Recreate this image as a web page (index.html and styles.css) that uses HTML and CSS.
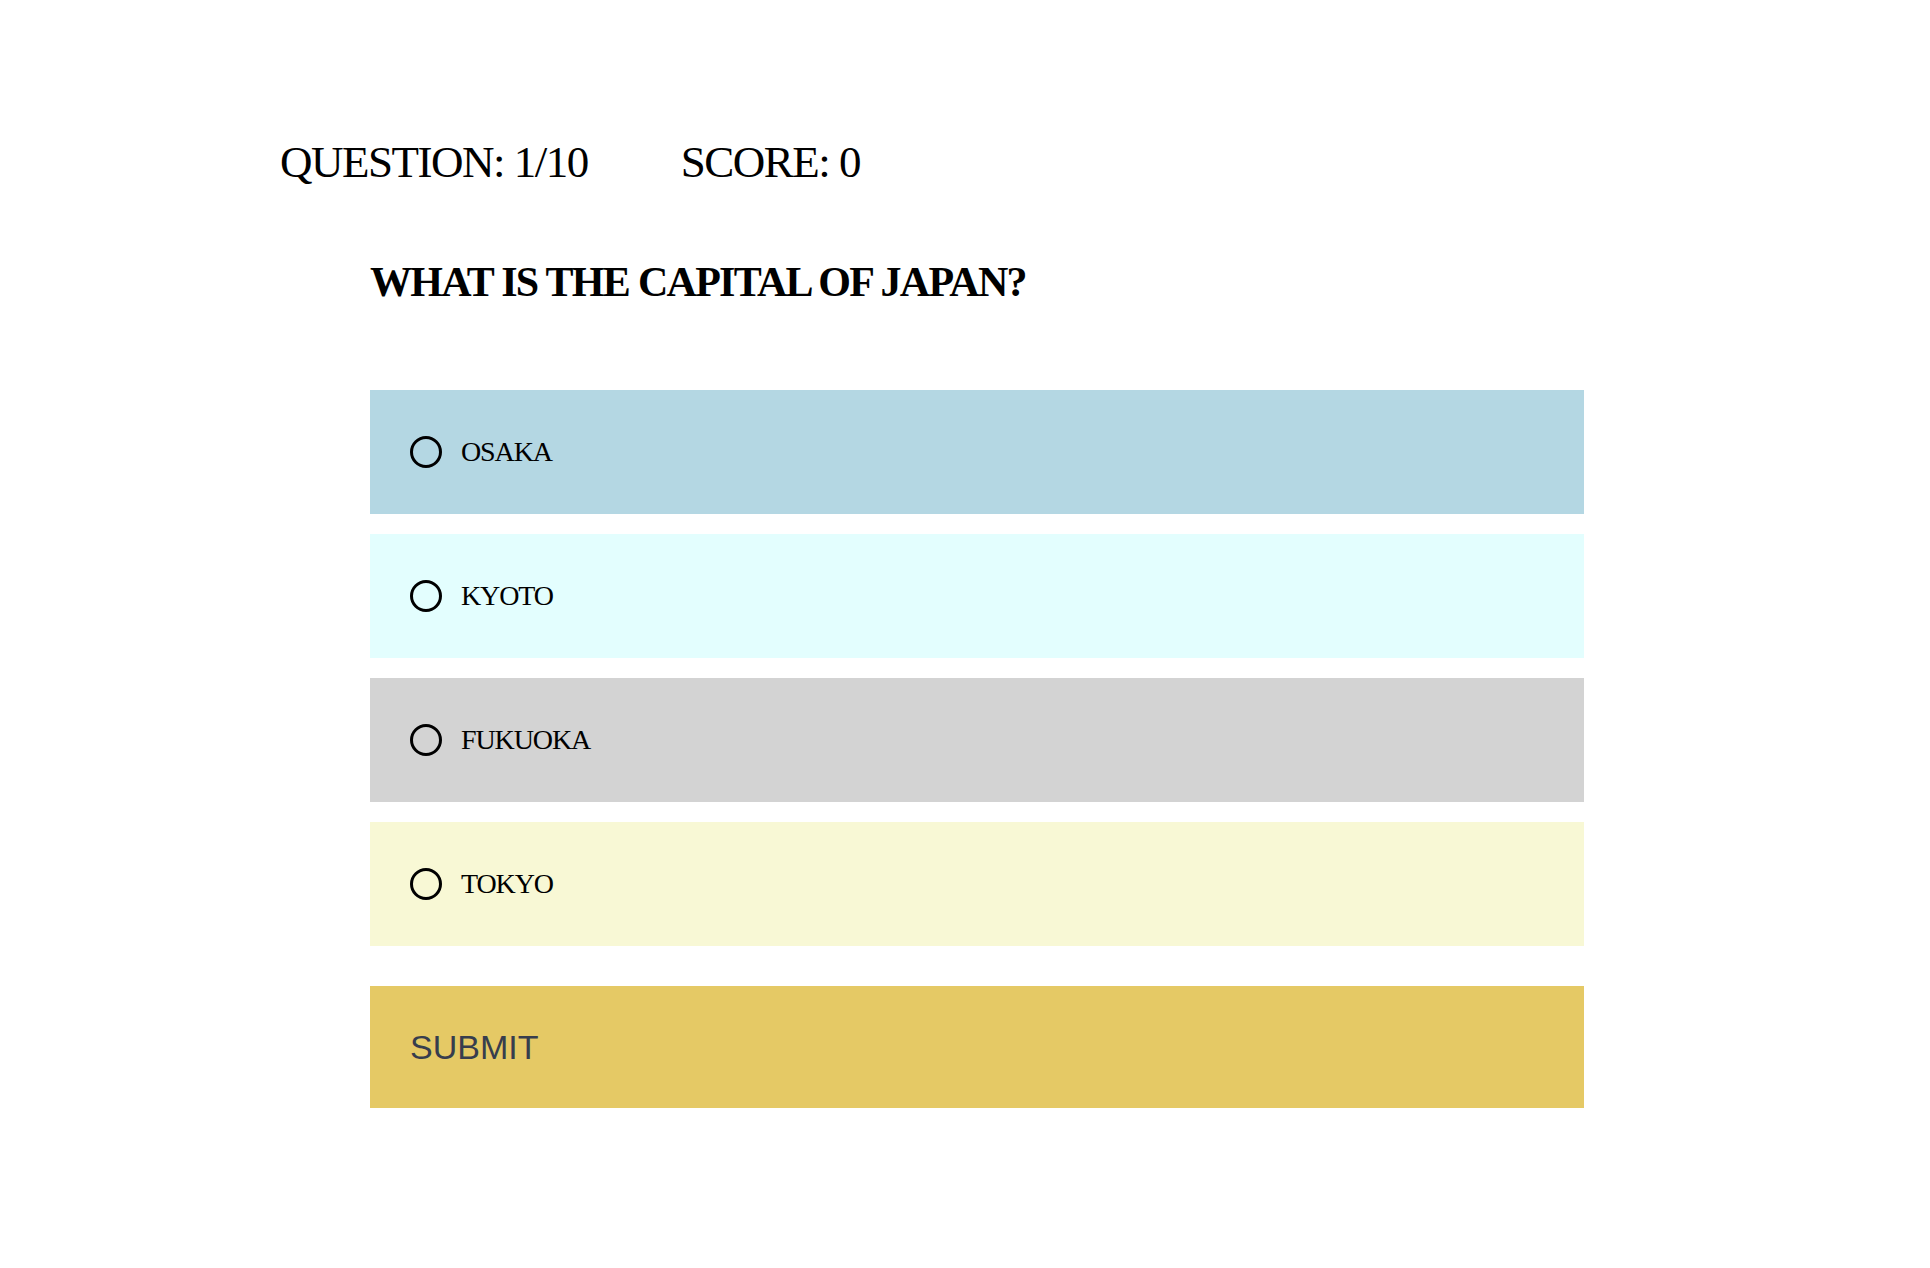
FILE: index.html
```html
<!DOCTYPE html>
<html lang="en">
<head>
<meta charset="utf-8">
<title>Quiz</title>
<link rel="stylesheet" href="styles.css">
</head>
<body>
<div class="page">
  <div class="status">
    <span class="status-item">QUESTION: 1/10</span>
    <span class="status-item">SCORE: 0</span>
  </div>
  <div class="quiz">
    <h2 class="question">WHAT IS THE CAPITAL OF JAPAN?</h2>
    <div class="options">
      <label class="option opt-blue"><span class="radio"></span><span class="option-text">OSAKA</span></label>
      <label class="option opt-cyan"><span class="radio"></span><span class="option-text">KYOTO</span></label>
      <label class="option opt-gray"><span class="radio"></span><span class="option-text">FUKUOKA</span></label>
      <label class="option opt-yellow"><span class="radio"></span><span class="option-text">TOKYO</span></label>
    </div>
    <button class="submit">SUBMIT</button>
  </div>
</div>
</body>
</html>
```
FILE: styles.css
```css
* { box-sizing: border-box; }
html, body { margin: 0; padding: 0; background: #ffffff; }
body { font-family: "Liberation Serif", serif; color: #000; }
.page { padding-top: 136px; }
.status { display: flex; gap: 93px; padding-left: 280px; }
.status-item { font-family: "Liberation Serif", serif; font-size: 45px; line-height: 52px; letter-spacing: -1.5px; }
.quiz { margin-left: 370px; width: 1214px; }
.question { margin: 0; padding-top: 70px; font-family: "Liberation Serif", serif; font-weight: bold; font-size: 42px; line-height: 48px; letter-spacing: -1.7px; }
.options { display: flex; flex-direction: column; gap: 20px; margin-top: 84px; }
.option { display: flex; align-items: center; height: 124px; padding-left: 40px; gap: 19px; }
.opt-blue { background: #b4d7e3; }
.opt-cyan { background: #e3fefe; }
.opt-gray { background: #d3d3d3; }
.opt-yellow { background: #f8f8d5; }
.radio { width: 32px; height: 32px; border: 3.5px solid #000; border-radius: 50%; flex: none; }
.option-text { font-family: "Liberation Serif", serif; font-size: 28px; letter-spacing: -1.1px; }
.submit { display: block; width: 100%; height: 122px; margin-top: 40px; border: 0; background: #e5c965; text-align: left; padding-left: 40px; font-family: "Liberation Sans", Arial, sans-serif; font-size: 34px; color: #373d4d; }
```
